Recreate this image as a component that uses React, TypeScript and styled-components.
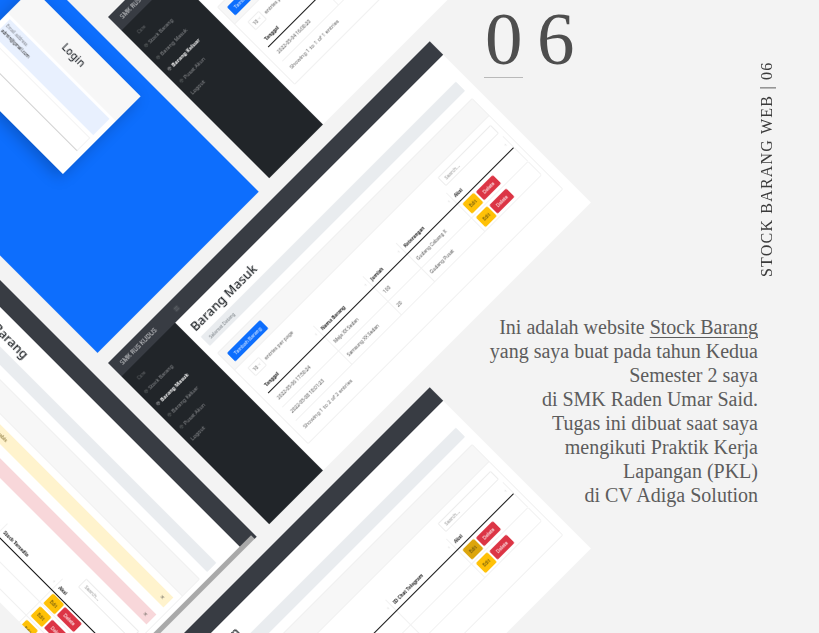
import React from "react";
import styled, { createGlobalStyle } from "styled-components";
import { ChevronDown, Menu, Package } from "lucide-react";

const Global = createGlobalStyle`
  html, body { margin: 0; padding: 0; background: #f3f3f3; overflow: hidden; }
`;

const Page = styled.main`
  display: flex;
  position: relative;
  width: 819px;
  height: 633px;
  overflow: hidden;
  background: #f3f3f3;
`;

const Stage = styled.section`
  position: relative;
  flex: none;
  width: 484px;
`;

const Win = styled.article<{ $x: number; $y: number; $angle: number }>`
  position: absolute;
  left: ${(p) => p.$x}px;
  top: ${(p) => p.$y}px;
  width: 455px;
  height: 228px;
  display: flex;
  flex-direction: column;
  overflow: hidden;
  background: #fff;
  transform-origin: 0 0;
  transform: rotate(${(p) => p.$angle}deg);
  filter: blur(0.25px);
  font-family: "Noto Sans", "Open Sans", sans-serif;
`;

const Navbar = styled.header`
  flex: none;
  display: flex;
  align-items: center;
  height: 19px;
  background: #383c43;
  color: #aeb1b5;
`;

const Brand = styled.div`
  flex: none;
  width: 76px;
  padding-left: 9px;
  box-sizing: border-box;
  font-size: 6.2px;
  color: #d8d9db;
  white-space: nowrap;
`;

const Burger = styled.span`
  display: flex;
  margin-left: 8px;
`;

const Body = styled.div`
  flex: 1;
  display: flex;
  min-height: 0;
`;

const Sidebar = styled.nav`
  flex: none;
  width: 76px;
  padding-top: 9px;
  background: #212529;
`;

const SideHeading = styled.div`
  height: 9px;
  margin-bottom: 2px;
  padding-left: 10px;
  font-size: 4.4px;
  line-height: 9px;
  color: #6d7073;
`;

const SideItem = styled.div<{ $active?: boolean }>`
  display: flex;
  align-items: center;
  gap: 2px;
  height: 16.5px;
  padding-left: 5px;
  font-size: 5.3px;
  font-weight: ${(p) => (p.$active ? 700 : 400)};
  color: ${(p) => (p.$active ? "#f4f4f4" : "#8d8f92")};
  white-space: nowrap;
`;

const Content = styled.div`
  flex: 1;
  min-width: 0;
  padding: 7px 10px 0 8px;
`;

const Title = styled.h1`
  margin: 0;
  height: 18px;
  font-size: 12.8px;
  font-weight: 500;
  line-height: 18px;
  color: #212529;
  white-space: nowrap;
`;

const Crumb = styled.div`
  display: flex;
  align-items: center;
  height: 13px;
  margin-top: 3px;
  padding-left: 6px;
  border-radius: 1px;
  background: #e9ecef;
  font-size: 4.6px;
  color: #7a8086;
`;

const Card = styled.section`
  margin-top: 10px;
  border: 1px solid #f0f0f0;
  border-radius: 1px;
  box-sizing: border-box;
`;

const CardHead = styled.div`
  display: flex;
  align-items: center;
  height: 24px;
  padding-left: 6px;
  box-sizing: border-box;
  background: #f7f7f7;
  border-bottom: 1px solid #f0f0f0;
`;

const BlueButton = styled.button`
  width: 47px;
  height: 12px;
  padding: 0;
  border: 0;
  border-radius: 1.5px;
  background: #0d6efd;
  color: #e8f1ff;
  font: 400 4.9px "Noto Sans", sans-serif;
  white-space: nowrap;
`;

const CardBody = styled.div`
  padding: 7px 5px 0 7px;
`;

const Alert = styled.div<{ $tone: string; $ink: string }>`
  display: flex;
  align-items: center;
  justify-content: space-between;
  height: 14px;
  margin-bottom: 10px;
  padding: 0 6px;
  background: ${(p) => p.$tone};
  color: ${(p) => p.$ink};
  font-size: 5px;
`;

const CloseMark = styled.span`
  font-size: 7px;
  color: #66625a;
`;

const Controls = styled.div`
  display: flex;
  align-items: center;
  height: 12px;
  padding-left: 3px;
  font-size: 5px;
  color: #666;
`;

const SelectBox = styled.div`
  display: flex;
  align-items: center;
  justify-content: center;
  gap: 1px;
  width: 16px;
  height: 12px;
  margin-right: 3px;
  box-sizing: border-box;
  border: 1px solid #eeeeee;
  border-radius: 1px;
  color: #555;
  font-size: 4.8px;
`;

const SearchBox = styled.div`
  display: flex;
  align-items: center;
  width: 75px;
  height: 12px;
  margin-left: auto;
  padding-left: 4px;
  box-sizing: border-box;
  border: 1px solid #ececec;
  border-radius: 1px;
  color: #9a9a9a;
  font-size: 4.8px;
`;

const Table = styled.div`
  margin-top: 5px;
`;

const Row = styled.div<{ $cols: string; $h: number; $head?: boolean }>`
  display: grid;
  grid-template-columns: ${(p) => p.$cols};
  height: ${(p) => p.$h}px;
  box-sizing: border-box;
  border-bottom: 1px solid ${(p) => (p.$head ? "#111" : "#f1f1f1")};
`;

const Th = styled.div`
  display: flex;
  align-items: center;
  justify-content: space-between;
  padding: 0 3px;
  border-right: 1px solid #f1f1f1;
  font-size: 4.7px;
  font-weight: 700;
  color: #222;
  white-space: nowrap;
`;

const Sort = styled.span`
  font-size: 4px;
  font-weight: 400;
  color: #b5b5b5;
`;

const Td = styled.div`
  display: flex;
  align-items: center;
  gap: 2px;
  padding: 0 3px;
  border-right: 1px solid #f1f1f1;
  font-size: 4.8px;
  color: #555;
  white-space: nowrap;
`;

const ActionButton = styled.span<{ $bg: string; $fg: string; $w: number; $h: number }>`
  display: flex;
  align-items: center;
  justify-content: center;
  flex: none;
  width: ${(p) => p.$w}px;
  height: ${(p) => p.$h}px;
  border-radius: 1.5px;
  background: ${(p) => p.$bg};
  color: ${(p) => p.$fg};
  font-size: 4.8px;
`;

const Footer = styled.div`
  height: 24px;
  padding-left: 1px;
  font-size: 5.4px;
  line-height: 20px;
  color: #6a6a6a;
`;

const Scrollbar = styled.div`
  position: absolute;
  top: 3px;
  right: 0;
  bottom: 0;
  width: 5px;
  background: #a9a9a9;
`;

const BlueWin = styled(Win)`
  align-items: center;
  padding-top: 16px;
  box-sizing: border-box;
  background: #0d6efd;
`;

const LoginCard = styled.section`
  flex: none;
  width: 153px;
  height: 110px;
  background: #fff;
  box-shadow: 0 5px 14px rgba(0, 0, 0, 0.22);
`;

const LoginHead = styled.div`
  display: flex;
  align-items: center;
  justify-content: center;
  height: 35px;
  background: #f7f7f7;
  font-size: 10.5px;
  font-weight: 500;
  color: #2d3136;
`;

const LoginBody = styled.div`
  display: flex;
  flex-direction: column;
  padding: 3px 6px 0;
`;

const FilledInput = styled.div`
  display: flex;
  flex-direction: column;
  gap: 2px;
  height: 23px;
  padding: 4px 2px 0;
  box-sizing: border-box;
  background: #e8f0fe;
  color: #222;
  font-size: 4.4px;
  line-height: 5px;
`;

const FieldLabel = styled.span`
  color: #80848c;
`;

const EmptyInput = styled.div`
  height: 19px;
  margin-top: 4px;
  box-sizing: border-box;
  border: 1px solid #f3f3f3;
  border-bottom-color: #cfcfcf;
`;

const Info = styled.aside`
  position: relative;
  z-index: 1;
  display: flex;
  flex: 1;
  min-width: 0;
`;

const InfoMain = styled.div`
  flex: none;
  width: 274px;
  padding-top: 1px;
`;

const BigNumber = styled.div`
  padding-left: 1px;
  font: 400 75px/75px "Liberation Serif", serif;
  letter-spacing: 14.5px;
  color: #4e4e4e;
  white-space: nowrap;
`;

const Rule = styled.div`
  width: 39px;
  height: 1px;
  margin-top: 1px;
  background: #b9b9b9;
`;

const Para = styled.p`
  margin: 237px 0 0;
  font: 400 20px/24px "Liberation Serif", serif;
  color: #5c5c5c;
  text-align: right;
`;

const Line = styled.span`
  display: block;
  white-space: nowrap;
`;

const Mark = styled.span`
  text-decoration: underline;
  text-underline-offset: 3px;
  text-decoration-thickness: 1px;
`;

const SideLabel = styled.div`
  flex: none;
  margin: 63px 0 0 0;
  height: 214px;
  writing-mode: vertical-rl;
  transform: rotate(180deg);
  font: 400 16px/18px "Liberation Serif", serif;
  letter-spacing: 1.2px;
  color: #3a3a3a;
  white-space: nowrap;
`;

type Cell = string | "actions" | "actions-pressed";

interface AdminProps {
  x: number;
  y: number;
  angle: number;
  title: string;
  active: string;
  cols: string;
  heads: string[];
  rows: Cell[][];
  rowH: number[];
  alerts?: boolean;
  showEntries?: boolean;
  footer?: string;
  scrollbar?: boolean;
}

const menu = ["Stock Barang", "Barang Masuk", "Barang Keluar", "Pusat Akun"];

const Actions = ({ pressed }: { pressed?: boolean }) => (
  <>
    <ActionButton $bg={pressed ? "#dca50c" : "#ffc107"} $fg="#5a4a10" $w={16} $h={14}>
      Edit
    </ActionButton>
    <ActionButton $bg="#dc3545" $fg="#fff" $w={24} $h={12}>
      Delete
    </ActionButton>
  </>
);

const AdminWindow = (p: AdminProps) => (
  <Win $x={p.x} $y={p.y} $angle={p.angle}>
    <Navbar>
      <Brand>SMK RUS KUDUS</Brand>
      <Burger>
        <Menu size={6} strokeWidth={1.4} />
      </Burger>
    </Navbar>
    <Body>
      <Sidebar>
        <SideHeading>Core</SideHeading>
        {menu.map((m) => (
          <SideItem key={m} $active={m === p.active}>
            <Package size={4} strokeWidth={1.6} />
            {m}
          </SideItem>
        ))}
        <SideItem>Logout</SideItem>
      </Sidebar>
      <Content>
        <Title>{p.title}</Title>
        <Crumb>Selamat Datang</Crumb>
        <Card>
          <CardHead>
            <BlueButton>Tambah Barang</BlueButton>
          </CardHead>
          <CardBody>
            {p.alerts && (
              <>
                <Alert $tone="#fff3cd" $ink="#7a6526">
                  Perhatian: stok Meja XX Sedan sudah mau habis
                  <CloseMark>×</CloseMark>
                </Alert>
                <Alert $tone="#f8d7da" $ink="#7a2b33">
                  Perhatian: stok Samsung XX sudah habis
                  <CloseMark>×</CloseMark>
                </Alert>
              </>
            )}
            <Controls>
              {p.showEntries && (
                <>
                  <SelectBox>
                    10 <ChevronDown size={4} strokeWidth={1.5} />
                  </SelectBox>
                  entries per page
                </>
              )}
              <SearchBox>Search...</SearchBox>
            </Controls>
            <Table>
              <Row $cols={p.cols} $h={16} $head>
                {p.heads.map((h) => (
                  <Th key={h}>
                    {h}
                    <Sort>↕</Sort>
                  </Th>
                ))}
              </Row>
              {p.rows.map((r, i) => (
                <Row key={i} $cols={p.cols} $h={p.rowH[i]}>
                  {r.map((c, j) => (
                    <Td key={j}>
                      {c === "actions" ? <Actions /> : c === "actions-pressed" ? <Actions pressed /> : c}
                    </Td>
                  ))}
                </Row>
              ))}
            </Table>
            {p.footer && <Footer>{p.footer}</Footer>}
          </CardBody>
        </Card>
      </Content>
    </Body>
    {p.scrollbar && <Scrollbar />}
  </Win>
);

const stockCols = "80px 70px 47px 71px 80px";
const stockHeads = ["Tanggal", "Nama Barang", "Jumlah", "Keterangan", "Aksi"];

export default function App() {
  return (
    <Page>
      <Global />
      <Stage>
        <BlueWin $x={-63} $y={-130.5} $angle={45}>
          <LoginCard>
            <LoginHead>Login</LoginHead>
            <LoginBody>
              <FilledInput>
                <FieldLabel>Email address</FieldLabel>
                admin@gmail.com
              </FilledInput>
              <EmptyInput />
            </LoginBody>
          </LoginCard>
        </BlueWin>
        <AdminWindow
          x={108.4}
          y={16.6}
          angle={-45}
          title="Barang Keluar"
          active="Barang Keluar"
          cols={stockCols}
          heads={stockHeads}
          rows={[["2022-05-04 16:00:20", "Meja XX Sedan", "10", "Gudang Pusat", "actions"]]}
          rowH={[20]}
          showEntries
          footer="Showing 1 to 1 of 1 entries"
        />
        <AdminWindow
          x={108.4}
          y={362.6}
          angle={-45}
          title="Barang Masuk"
          active="Barang Masuk"
          cols={stockCols}
          heads={stockHeads}
          rows={[
            ["2022-05-06 17:50:24", "Meja XX Sedan", "100", "Gudang Cabang X", "actions"],
            ["2022-05-08 18:01:23", "Samsung XX Sedan", "20", "Gudang Pusat", "actions"],
          ]}
          rowH={[20, 19]}
          showEntries
          footer="Showing 1 to 2 of 2 entries"
        />
        <AdminWindow
          x={108.4}
          y={708.6}
          angle={-45}
          title="Data Akun"
          active="Pusat Akun"
          cols="80px 102px 86px 80px"
          heads={["Username", "Password", "ID Chat Telegram", "Aksi"]}
          rows={[
            ["admin", "", "", "actions-pressed"],
            ["staff", "", "", "actions"],
          ]}
          rowH={[20, 19]}
          showEntries
          footer="Showing 1 to 2 of 2 entries"
        />
        <AdminWindow
          x={-65}
          y={214.6}
          angle={45}
          title="Stock Barang"
          active="Stock Barang"
          cols="90px 88px 78px 92px"
          heads={["Kode", "Nama Barang", "Stock Tersedia", "Aksi"]}
          rows={[
            ["BRG-01", "Meja XX Sedan", "", "actions"],
            ["BRG-02", "Samsung XX", "", "actions"],
            ["BRG-03", "Laptop XX", "", "actions"],
          ]}
          rowH={[17, 19, 18]}
          alerts
          scrollbar
        />
      </Stage>
      <Info>
        <InfoMain>
          <BigNumber>06</BigNumber>
          <Rule />
          <Para>
            <Line>
              Ini adalah website <Mark>Stock Barang</Mark>
            </Line>
            <Line>yang saya buat pada tahun Kedua</Line>
            <Line>Semester 2 saya</Line>
            <Line>di SMK Raden Umar Said.</Line>
            <Line>Tugas ini dibuat saat saya</Line>
            <Line>mengikuti Praktik Kerja</Line>
            <Line>Lapangan (PKL)</Line>
            <Line>di CV Adiga Solution</Line>
          </Para>
        </InfoMain>
        <SideLabel>STOCK BARANG WEB | 06</SideLabel>
      </Info>
    </Page>
  );
}
